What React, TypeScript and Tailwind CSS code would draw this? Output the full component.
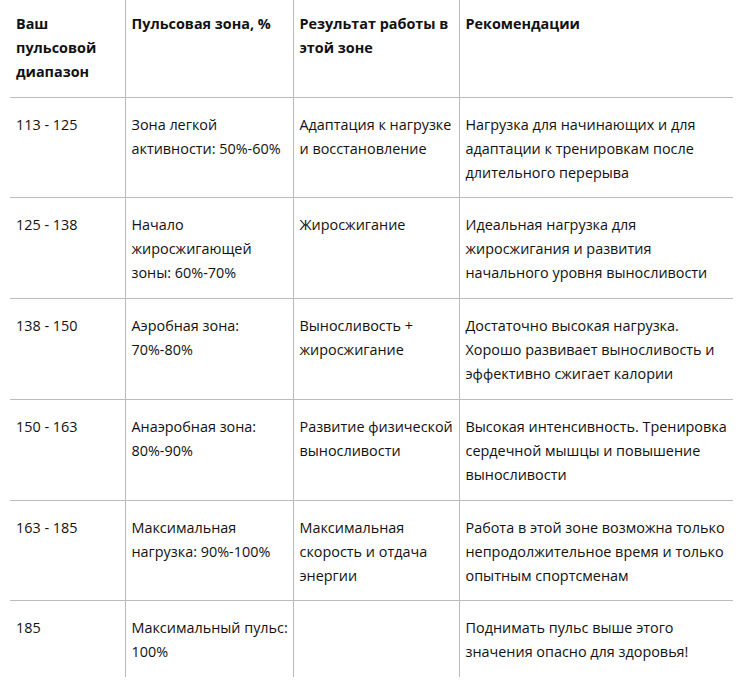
const headers = ['Ваш пульсовой диапазон', 'Пульсовая зона, %', 'Результат работы в этой зоне', 'Рекомендации'];

const rows: string[][] = [
  ['113 - 125', 'Зона легкой активности: 50%-60%', 'Адаптация к нагрузке и восстановление', 'Нагрузка для начинающих и для адаптации к тренировкам после длительного перерыва'],
  ['125 - 138', 'Начало жиросжигающей зоны: 60%-70%', 'Жиросжигание', 'Идеальная нагрузка для жиросжигания и развития начального уровня выносливости'],
  ['138 - 150', 'Аэробная зона: 70%-80%', 'Выносливость + жиросжигание', 'Достаточно высокая нагрузка. Хорошо развивает выносливость и эффективно сжигает калории'],
  ['150 - 163', 'Анаэробная зона: 80%-90%', 'Развитие физической выносливости', 'Высокая интенсивность. Тренировка сердечной мышцы и повышение выносливости'],
  ['163 - 185', 'Максимальная нагрузка: 90%-100%', 'Максимальная скорость и отдача энергии', 'Работа в этой зоне возможна только непродолжительное время и только опытным спортсменам'],
  ['185', 'Максимальный пульс: 100%', '', 'Поднимать пульс выше этого значения опасно для здоровья!'],
];

const colWidths = ['w-[115px]', 'w-[168px]', 'w-[166px]', 'w-[274px]'];

export default function App() {
  return (
    <div className="bg-white min-h-screen font-['Open_Sans',sans-serif] text-[14.4px] leading-[24px] text-[#111]">
      <table className="ml-[10px] w-[723px] table-fixed border-collapse">
        <colgroup>
          {colWidths.map((w, i) => (
            <col key={i} className={w} />
          ))}
        </colgroup>
        <thead>
          <tr>
            {headers.map((h, i) => (
              <th
                key={i}
                className={
                  'border-b border-[#bcbcbc] pl-[6px] pr-[2px] pt-[12px] pb-[12.5px] text-left align-top font-bold ' +
                  (i > 0 ? 'border-l' : '')
                }
              >
                {h}
              </th>
            ))}
          </tr>
        </thead>
        <tbody>
          {rows.map((row, r) => (
            <tr key={r}>
              {row.map((cell, i) => (
                <td
                  key={i}
                  className={
                    'border-[#bcbcbc] pl-[6px] pr-[2px] pt-[15px] pb-[12.8px] align-top ' +
                    (i > 0 ? 'border-l ' : '') +
                    (r < rows.length - 1 ? 'border-b' : '')
                  }
                >
                  {cell}
                </td>
              ))}
            </tr>
          ))}
        </tbody>
      </table>
    </div>
  );
}
